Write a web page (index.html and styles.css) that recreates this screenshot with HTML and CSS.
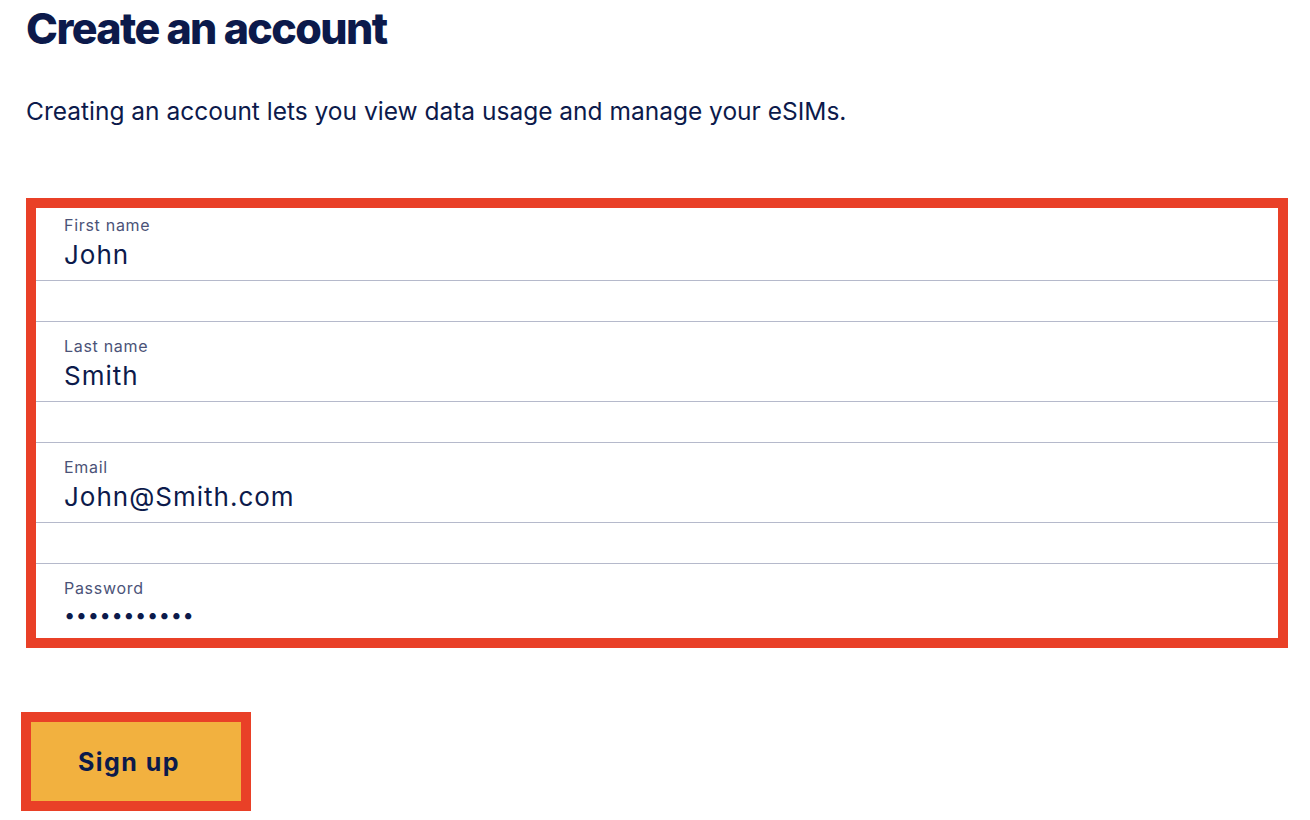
FILE: index.html
```html
<!DOCTYPE html>
<html lang="en">
<head>
<meta charset="utf-8">
<title>Create an account</title>
<link rel="stylesheet" href="styles.css">
</head>
<body>
<main class="page">
  <h1 class="title">Create an account</h1>
  <p class="lead">Creating an account lets you view data usage and manage your eSIMs.</p>
  <form class="form">
    <div class="fields">
      <div class="field">
        <label class="field-label" for="fn">First name</label>
        <input class="field-input" id="fn" type="text" value="John">
      </div>
      <div class="field-hint"></div>
      <div class="field">
        <label class="field-label" for="ln">Last name</label>
        <input class="field-input" id="ln" type="text" value="Smith">
      </div>
      <div class="field-hint"></div>
      <div class="field">
        <label class="field-label" for="em">Email</label>
        <input class="field-input" id="em" type="text" value="John@Smith.com">
      </div>
      <div class="field-hint"></div>
      <div class="field">
        <label class="field-label" for="pw">Password</label>
        <span class="field-dots" id="pw">•••••••••••</span>
      </div>
    </div>
  </form>
  <div class="actions">
    <button class="btn" type="button">Sign up</button>
  </div>
</main>
</body>
</html>
```
FILE: styles.css
```css
* { box-sizing: border-box; }
html, body { margin: 0; padding: 0; background: #fff; }
body {
  font-family: Inter, "Noto Sans", sans-serif;
  color: #0c1a4b;
}
.page {
  padding: 2px 22px 0 26px;
}
.title {
  margin: 0;
  font-size: 43px;
  line-height: 52px;
  font-weight: 800;
  letter-spacing: -1.6px;
  color: #0c1a4b;
}
.lead {
  margin: 41px 0 0;
  font-size: 24.5px;
  line-height: 32px;
  font-weight: 400;
  color: #0c1a4b;
}
.form {
  margin-top: 71px;
  border: 10px solid #e94027;
  height: 450px;
  overflow: hidden;
}
.fields {
  margin-top: -7px;
  display: flex;
  flex-direction: column;
}
.field {
  height: 80px;
  border-bottom: 1px solid #b5b9cb;
  padding: 14px 28px 0;
  display: flex;
  flex-direction: column;
}
.field-hint {
  height: 41px;
  border-bottom: 1px solid #b5b9cb;
}
.field-label {
  font-size: 16px;
  line-height: 20px;
  color: #4b5378;
  letter-spacing: 0.7px;
}
.field-input {
  border: 0;
  outline: none;
  padding: 0;
  margin: 3px 0 0;
  font-family: inherit;
  font-size: 26px;
  line-height: 34px;
  height: 34px;
  color: #0c1a4b;
  letter-spacing: 1px;
  background: transparent;
  width: 100%;
}
.field-dots {
  margin-top: 3px;
  font-size: 20px;
  line-height: 28px;
  letter-spacing: 0.6px;
  color: #0c1a4b;
}
.actions {
  margin-top: 64px;
  margin-left: -5px;
  display: flex;
}
.btn {
  width: 230px;
  height: 99px;
  border: 10px solid #e94027;
  background: #f2b13f;
  font-family: inherit;
  font-size: 25px;
  font-weight: 700;
  letter-spacing: 1.5px;
  color: #0c1a4b;
  padding: 0 14px 0 0;
}
```
